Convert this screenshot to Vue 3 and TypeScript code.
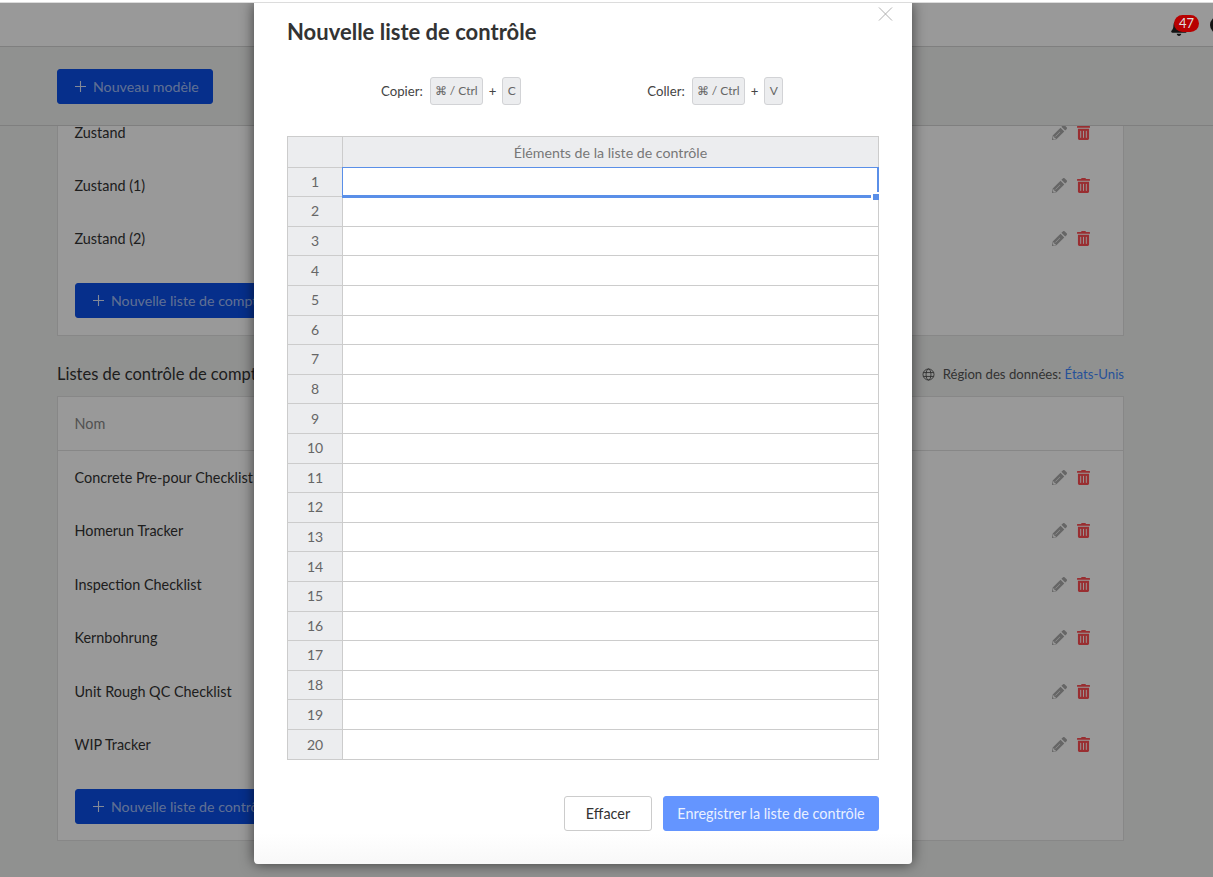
<script setup lang="ts">
const topRows: string[] = ['Zustand', 'Zustand (1)', 'Zustand (2)']
const accountRows: string[] = [
  'Concrete Pre-pour Checklist',
  'Homerun Tracker',
  'Inspection Checklist',
  'Kernbohrung',
  'Unit Rough QC Checklist',
  'WIP Tracker',
]
const gridRows: number[] = Array.from({ length: 20 }, (_, i) => i + 1)
</script>

<template>
  <div class="app">
    <div class="top-strip"></div>
    <div class="stage">
      <div class="page">
        <header class="header">
          <div class="bell">
            <svg class="bell-icon" viewBox="0 0 448 512"><path d="M224 512c35 0 64-29 64-64H160c0 35 29 64 64 64zm215-150c-19-21-55-52-55-154 0-78-54-140-127-155V32a32 32 0 0 0-64 0v21C120 68 66 130 66 208c0 102-36 133-55 154-6 6-9 14-9 22 0 16 13 32 32 32h380c19 0 32-16 32-32 0-8-3-16-7-22z"/></svg>
            <span class="badge">47</span>
          </div>
          <span class="avatar"></span>
        </header>
        <div class="toolbar">
          <button class="btn-primary">
            <svg class="plus" viewBox="0 0 12 12"><path d="M6 0v12M0 6h12"/></svg>
            Nouveau modèle
          </button>
        </div>
        <div class="scroller">
          <div class="scroll-inner">
            <section class="card card-first">
              <div v-for="r in topRows" :key="r" class="row">
                <span>{{ r }}</span>
                <span class="actions">
                  <svg class="pencil" viewBox="0 0 512 512"><path d="M497 75 437 15a48 48 0 0 0-68 0l-48 48 128 128 48-48a48 48 0 0 0 0-68zM291 93 24 360 0 496a14 14 0 0 0 16 16l136-24 267-267zM125 399l-12-12 156-156 12 12zm-37 85H40v-48l-12-12 4-28h48v48h48l-4 28z"/></svg>
                  <svg class="trash" viewBox="0 0 448 512"><path d="M32 464a48 48 0 0 0 48 48h288a48 48 0 0 0 48-48V128H32zm272-256a16 16 0 0 1 32 0v224a16 16 0 0 1-32 0zm-96 0a16 16 0 0 1 32 0v224a16 16 0 0 1-32 0zm-96 0a16 16 0 0 1 32 0v224a16 16 0 0 1-32 0zM432 32H312l-9-19a24 24 0 0 0-22-13H167a24 24 0 0 0-21 13l-9 19H16A16 16 0 0 0 0 48v32a16 16 0 0 0 16 16h416a16 16 0 0 0 16-16V48a16 16 0 0 0-16-16z"/></svg>
                </span>
              </div>
              <div class="card-foot card-foot-first">
                <button class="btn-primary">
                  <svg class="plus" viewBox="0 0 12 12"><path d="M6 0v12M0 6h12"/></svg>
                  Nouvelle liste de compte
                </button>
              </div>
            </section>

            <div class="section-head">
              <h2>Listes de contrôle de compte</h2>
              <div class="region">
                <svg class="globe" viewBox="0 0 16 16"><circle cx="8" cy="8" r="6.8"/><ellipse cx="8" cy="8" rx="3" ry="6.8"/><path d="M1.6 5.6h12.8M1.6 10.4h12.8"/></svg>
                <span>Région des données: <a class="link">États-Unis</a></span>
              </div>
            </div>

            <section class="card">
              <div class="table-head">Nom</div>
              <div class="rows-tall">
                <div v-for="r in accountRows" :key="r" class="row row-tall">
                  <span>{{ r }}</span>
                  <span class="actions">
                    <svg class="pencil" viewBox="0 0 512 512"><path d="M497 75 437 15a48 48 0 0 0-68 0l-48 48 128 128 48-48a48 48 0 0 0 0-68zM291 93 24 360 0 496a14 14 0 0 0 16 16l136-24 267-267zM125 399l-12-12 156-156 12 12zm-37 85H40v-48l-12-12 4-28h48v48h48l-4 28z"/></svg>
                    <svg class="trash" viewBox="0 0 448 512"><path d="M32 464a48 48 0 0 0 48 48h288a48 48 0 0 0 48-48V128H32zm272-256a16 16 0 0 1 32 0v224a16 16 0 0 1-32 0zm-96 0a16 16 0 0 1 32 0v224a16 16 0 0 1-32 0zm-96 0a16 16 0 0 1 32 0v224a16 16 0 0 1-32 0zM432 32H312l-9-19a24 24 0 0 0-22-13H167a24 24 0 0 0-21 13l-9 19H16A16 16 0 0 0 0 48v32a16 16 0 0 0 16 16h416a16 16 0 0 0 16-16V48a16 16 0 0 0-16-16z"/></svg>
                  </span>
                </div>
              </div>
              <div class="card-foot card-foot-last">
                <button class="btn-primary">
                  <svg class="plus" viewBox="0 0 12 12"><path d="M6 0v12M0 6h12"/></svg>
                  Nouvelle liste de contrôle
                </button>
              </div>
            </section>
          </div>
        </div>
      </div>

      <div class="backdrop"></div>

      <div class="modal" role="dialog">
        <svg class="close" viewBox="0 0 15 15"><path d="M.5.5l14 14M14.5.5l-14 14"/></svg>
        <h1 class="title">Nouvelle liste de contrôle</h1>
        <div class="shortcuts">
          <div class="shortcut">
            <span class="label">Copier:</span><kbd>⌘ / Ctrl</kbd><span class="op">+</span><kbd class="key">C</kbd>
          </div>
          <div class="shortcut">
            <span class="label">Coller:</span><kbd>⌘ / Ctrl</kbd><span class="op">+</span><kbd class="key">V</kbd>
          </div>
        </div>
        <div class="grid">
          <div class="corner"></div>
          <div class="col-head">Éléments de la liste de contrôle</div>
          <template v-for="n in gridRows" :key="n">
            <div class="row-num">{{ n }}</div>
            <div class="cell" :class="{ active: n === 1 }">
              <span v-if="n === 1" class="handle"></span>
            </div>
          </template>
        </div>
        <div class="modal-foot">
          <button class="btn-default">Effacer</button>
          <button class="btn-save">Enregistrer la liste de contrôle</button>
        </div>
      </div>
    </div>
  </div>
</template>

<style>
html, body { margin: 0; padding: 0; background: #fff; }
</style>

<style scoped>
.app {
  width: 1213px;
  height: 877px;
  overflow: hidden;
  font-family: Lato, "Open Sans", sans-serif;
  font-size: 14.4px;
  color: #333;
  display: flex;
  flex-direction: column;
}
.top-strip { height: 2px; border-bottom: 1px solid #dcdcdc; background: #fff; flex: none; }
.stage { position: relative; flex: 1; min-height: 0; overflow: hidden; }
.page { height: 100%; display: flex; flex-direction: column; background: #f0f2f0; }
.header {
  height: 43px;
  flex: none;
  background: #fff;
  border-bottom: 1px solid #d4d4d4;
  display: flex;
  align-items: center;
  justify-content: flex-end;
  gap: 11px;
  overflow: hidden;
}
.bell { position: relative; width: 28px; height: 26px; }
.bell-icon { position: absolute; left: 0; top: 6px; width: 16px; height: 18px; fill: #222; }
.badge {
  position: absolute;
  z-index: 1;
  left: 3px;
  top: 3px;
  width: 25px;
  height: 17px;
  border-radius: 9px;
  background: #b80000;
  color: #ddd;
  font-size: 13px;
  line-height: 17px;
  text-align: center;
}
.avatar {
  width: 18px;
  height: 18px;
  border-radius: 50%;
  background: #222;
  margin-right: -15px;
  flex: none;
}
.toolbar {
  height: 56px;
  flex: none;
  padding: 22px 57px 0;
  background: #f0f2f0;
  border-bottom: 1px solid #d4d4d4;
}
.btn-primary {
  height: 35px;
  padding: 0 13px 0 17px;
  border: 1px solid #0b4fe8;
  border-radius: 3px;
  background: #0b4fe8;
  color: rgba(255, 255, 255, 0.62);
  font: 400 14.2px Lato, sans-serif;
  display: inline-flex;
  align-items: center;
  gap: 7px;
  white-space: nowrap;
}
.plus { width: 11px; height: 11px; stroke: rgba(255, 255, 255, 0.85); stroke-width: 1.2; fill: none; }
.scroller { flex: 1; min-height: 0; overflow: hidden; }
.scroll-inner { margin: -20.5px 89px 0 57px; }
.card { background: #fff; border: 1px solid #e2e2e2; }
.card-first { border-top: 0; }
.row {
  height: 53.4px;
  display: flex;
  align-items: center;
  justify-content: space-between;
  padding: 0 33px 0 16.5px;
}
.rows-tall { margin-top: -0.5px; }
.actions { display: inline-flex; align-items: center; gap: 10px; }
.pencil { width: 15px; height: 15px; fill: #aaa; }
.trash { width: 13px; height: 15px; fill: #ff4d52; }
.card-foot { padding: 17px 17px 16px; display: flex; }
.card-foot-first { padding-top: 16.9px; padding-bottom: 17.8px; }
.card-foot-last { padding-top: 17.3px; padding-bottom: 16.2px; }
.section-head {
  height: 60px;
  display: flex;
  align-items: flex-end;
  justify-content: space-between;
  padding-bottom: 12px;
  box-sizing: border-box;
}
.section-head h2 { margin: 0; font-size: 16.5px; font-weight: 400; color: #333; line-height: 20px; }
.region { display: flex; align-items: center; gap: 8px; font-size: 13.15px; color: #555; line-height: 20px; }
.globe { width: 13px; height: 13px; fill: none; stroke: #444; stroke-width: 1; }
.link { color: #4088ff; }
.table-head {
  height: 53px;
  border-bottom: 1px solid #e2e2e2;
  display: flex;
  align-items: center;
  padding-left: 16.5px;
  color: #888;
}
.backdrop { position: absolute; inset: 0; background: rgba(0, 0, 0, 0.4); }
.modal {
  position: absolute;
  z-index: 2;
  left: 254px;
  top: 0;
  width: 658px;
  height: 861px;
  box-sizing: border-box;
  padding: 0 33px;
  background: linear-gradient(to bottom, #fff 830px, #f8f8f8 861px);
  border-radius: 0 0 4px 4px;
  box-shadow: 0 0 14px rgba(0, 0, 0, 0.6);
  display: flex;
  flex-direction: column;
}
.close {
  position: absolute;
  right: 19px;
  top: 4px;
  width: 15px;
  height: 14px;
  fill: none;
  stroke: #aaa;
  stroke-width: 1;
}
.title { margin: 0; padding-top: 15px; font-size: 22px; line-height: 28px; font-weight: 700; color: #333; }
.shortcuts {
  margin-top: 31px;
  height: 28px;
  display: flex;
  padding-left: 94px;
  gap: 126px;
}
.shortcut { display: flex; align-items: center; font-size: 13.2px; color: #444; }
.label { margin-right: 1px; }
kbd {
  font: 400 12px Lato, sans-serif;
  color: #666;
  height: 28px;
  box-sizing: border-box;
  line-height: 26px;
  padding: 0 4px;
  margin-left: 6px;
  background: #ecedef;
  border: 1px solid #d2d3d6;
  border-radius: 3px;
}
.key { width: 19px; padding: 0; text-align: center; }
.op { margin-left: 6px; }
.grid {
  margin-top: 31px;
  display: grid;
  grid-template-columns: 55px 1fr;
  grid-template-rows: 29.6px repeat(19, 29.6px) 30.4px;
  border: 1px solid #ccc;
  box-sizing: border-box;
  height: 624px;
}
.corner, .col-head, .row-num { background: #ecedef; color: #777; }
.corner { border-right: 1px solid #ccc; }
.col-head { display: flex; align-items: center; justify-content: center; padding-top: 2px; box-sizing: border-box; font-size: 14.2px; line-height: 1; }
.row-num {
  border-top: 1px solid #ccc;
  border-right: 1px solid #ccc;
  display: flex;
  align-items: center;
  justify-content: center;
  padding-bottom: 1px;
  font-size: 14px;
  color: #666;
  box-sizing: border-box;
}
.cell { border-top: 1px solid #ccc; box-sizing: border-box; position: relative; }
.cell.active {
  border-top: 1px solid #5a8fe8;
  border-left: 1px solid #5a8fe8;
  border-right: 2px solid #5a8fe8;
  border-bottom: 3px solid #5a8fe8;
  height: 31.4px;
  margin-left: -1px;
  margin-right: -1px;
  z-index: 1;
}
.handle {
  position: absolute;
  right: -2px;
  bottom: -5px;
  width: 6px;
  height: 6px;
  background: #5a8fe8;
  border-left: 2px solid #fff;
  border-top: 2px solid #fff;
}
.modal-foot { margin-top: 36px; display: flex; justify-content: flex-end; gap: 11px; }
.btn-default {
  height: 35px;
  width: 88px;
  box-sizing: border-box;
  background: #fff;
  border: 1px solid #ccc;
  border-radius: 3px;
  color: #333;
  font: 400 14.4px Lato, sans-serif;
}
.btn-save {
  height: 35px;
  width: 216px;
  box-sizing: border-box;
  background: #6495ff;
  border: 1px solid #6495ff;
  border-radius: 3px;
  color: #eaf0ff;
  font: 400 14.4px Lato, sans-serif;
}
</style>
